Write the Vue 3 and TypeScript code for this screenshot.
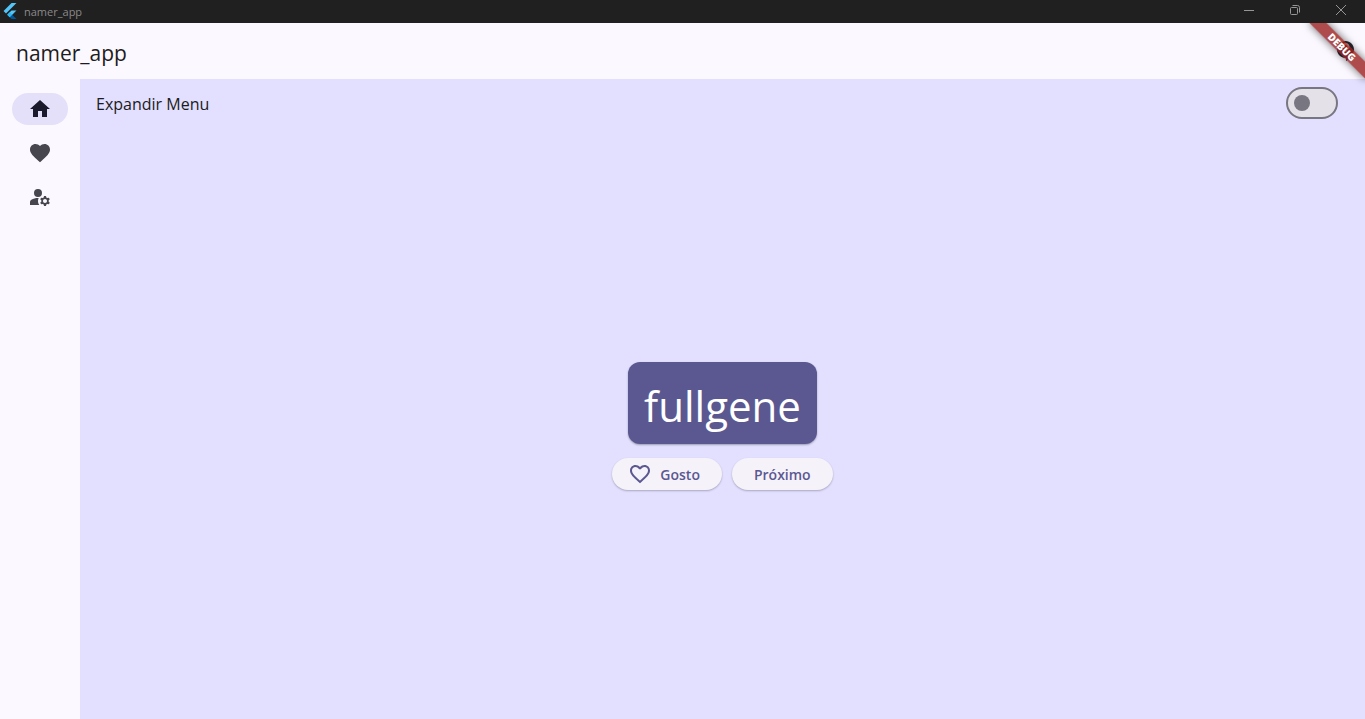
<script setup lang="ts">
import { ref } from 'vue'

interface Destination {
  id: string
  label: string
  path: string
}

const destinations: Destination[] = [
  { id: 'home', label: 'Início', path: 'M10 20v-6h4v6h5v-8h3L12 3 2 12h3v8z' },
  {
    id: 'favorites',
    label: 'Favoritos',
    path: 'M12 21.35l-1.45-1.32C5.4 15.36 2 12.28 2 8.5 2 5.42 4.42 3 7.5 3c1.74 0 3.41.81 4.5 2.09C13.09 3.81 14.76 3 16.5 3 19.58 3 22 5.42 22 8.5c0 3.78-3.4 6.86-8.55 11.54L12 21.35z',
  },
  {
    id: 'account',
    label: 'Conta',
    path: 'M10 4a4 4 0 1 0 0 8 4 4 0 1 0 0-8zM10.67 13.02C10.45 13.01 10.23 13 10 13c-2.42 0-4.68.67-6.61 1.82C2.51 15.34 2 16.32 2 17.35V20h9.26C10.47 18.87 10 17.49 10 16c0-1.07.25-2.07.67-2.98zM20.75 16c0-.22-.03-.42-.06-.63l1.14-1.01-1-1.73-1.45.49c-.32-.27-.68-.48-1.08-.63L18 11h-2l-.3 1.49c-.4.15-.76.36-1.08.63l-1.45-.49-1 1.73 1.14 1.01c-.03.21-.06.41-.06.63s.03.42.06.63l-1.14 1.01 1 1.73 1.45-.49c.32.27.68.48 1.08.63L16 21h2l.3-1.49c.4-.15.76-.36 1.08-.63l1.45.49 1-1.73-1.14-1.01c.03-.21.06-.41.06-.63zM17 18c-1.1 0-2-.9-2-2s.9-2 2-2 2 .9 2 2-.9 2-2 2z',
  },
]

const selected = ref('home')
const expanded = ref(false)
const words = ['fullgene', 'bluebird', 'sunfield']
const index = ref(0)

function next(): void {
  index.value = (index.value + 1) % words.length
}
</script>

<template>
  <div class="window">
    <header class="titlebar">
      <svg class="logo" viewBox="0 0 24 24" aria-hidden="true">
        <path fill="#54c5f8" d="M14.3 0 2.3 12 6 15.7 21.7 0z" />
        <path fill="#54c5f8" d="M14.3 11.1 7.9 17.5l3.7 3.7 10.1-10.1z" />
        <path fill="#01579b" d="m11.6 21.2 2.8 2.8h7.3l-6.4-6.5z" />
        <path fill="#29b6f6" d="m7.9 17.5 3.7-3.7 3.7 3.7-3.7 3.7z" />
      </svg>
      <span class="window-name">namer_app</span>
      <div class="window-buttons">
        <button type="button" aria-label="Minimizar">
          <svg viewBox="0 0 10 10"><path d="M0 5.5h10" /></svg>
        </button>
        <button type="button" aria-label="Restaurar">
          <svg viewBox="0 0 10 10">
            <rect x=".5" y="2.5" width="7" height="7" rx="1" />
            <path d="M2.5 .5h5a2 2 0 0 1 2 2v5" />
          </svg>
        </button>
        <button type="button" aria-label="Fechar">
          <svg viewBox="0 0 10 10"><path d="M0 0l10 10M10 0 0 10" /></svg>
        </button>
      </div>
    </header>

    <div class="app">
      <div class="appbar">
        <h1>namer_app</h1>
        <button class="support" type="button" aria-label="Ajuda">
          <svg viewBox="0 0 24 24">
            <path
              d="M11.5 2C6.81 2 3 5.81 3 10.5S6.81 19 11.5 19h.5v3c4.86-2.34 8-7 8-11.5C20 5.81 16.19 2 11.5 2zm1 14.5h-2v-2h2v2zm0-3.5h-2c0-3.25 3-3 3-5 0-1.1-.9-2-2-2s-2 .9-2 2h-2c0-2.21 1.79-4 4-4s4 1.79 4 4c0 2.500-3 2.750-3 5z"
            />
          </svg>
        </button>
      </div>
      <div class="ribbon">DEBUG</div>

      <div class="body">
        <nav class="rail">
          <button
            v-for="item in destinations"
            :key="item.id"
            type="button"
            :class="{ active: selected === item.id }"
            :aria-label="item.label"
            @click="selected = item.id"
          >
            <svg viewBox="0 0 24 24"><path :d="item.path" /></svg>
          </button>
        </nav>

        <main class="content">
          <div class="option">
            <label for="expand">Expandir Menu</label>
            <input id="expand" v-model="expanded" class="switch" type="checkbox" role="switch" />
          </div>
          <div class="stage">
            <div class="card">{{ words[index] }}</div>
            <div class="actions">
              <button class="like" type="button">
                <svg viewBox="0 0 24 24">
                  <path
                    d="M16.5 3c-1.74 0-3.41.81-4.5 2.09C10.91 3.81 9.24 3 7.5 3 4.42 3 2 5.42 2 8.5c0 3.78 3.4 6.86 8.55 11.54L12 21.35l1.45-1.32C18.6 15.36 22 12.28 22 8.5 22 5.42 19.58 3 16.5 3zm-4.4 15.55l-.1.1-.1-.1C7.14 14.24 4 11.39 4 8.5 4 6.5 5.500 5 7.5 5c1.54 0 3.040.99 3.570 2.360h1.870C13.460 5.990 14.960 5 16.5 5c2 0 3.500 1.500 3.500 3.500 0 2.890-3.140 5.740-7.900 10.050z"
                  />
                </svg>
                <span>Gosto</span>
              </button>
              <button type="button" @click="next"><span>Próximo</span></button>
            </div>
          </div>
        </main>
      </div>
    </div>
  </div>
</template>

<style>
body {
  margin: 0;
}
</style>

<style scoped>
.window {
  display: flex;
  flex-direction: column;
  height: 100vh;
  overflow: hidden;
  background: #fcf8ff;
  color: #1c1b20;
  font-family: 'Open Sans', 'Noto Sans', sans-serif;
}
button {
  border: 0;
  padding: 0;
  background: none;
  font-family: inherit;
  color: inherit;
  cursor: pointer;
}
svg {
  display: block;
}
.titlebar {
  display: flex;
  align-items: center;
  height: 23px;
  flex: none;
  background: #202020;
  color: #8a8a8a;
}
.logo {
  width: 16px;
  height: 16px;
  margin: 0 4px 1px 2px;
}
.window-name {
  flex: 1;
  padding-left: 2px;
  font-size: 11px;
  line-height: 22px;
}
.window-buttons {
  display: flex;
  align-self: flex-start;
  padding-right: 1px;
}
.window-buttons button {
  display: grid;
  place-items: center;
  width: 46px;
  height: 20px;
}
.window-buttons svg {
  width: 10px;
  height: 10px;
  overflow: visible;
  fill: none;
  stroke: #969696;
  stroke-width: 1;
}
.app {
  position: relative;
  display: flex;
  flex: 1;
  flex-direction: column;
  min-height: 0;
  overflow: hidden;
}
.appbar {
  display: flex;
  align-items: center;
  justify-content: space-between;
  height: 56px;
  flex: none;
  padding: 0 7px 0 16px;
}
h1 {
  margin: 0;
  padding-top: 4px;
  font-size: 21px;
  font-weight: 400;
  line-height: 28px;
}
.support svg {
  width: 24px;
  height: 24px;
  fill: #2b2a33;
}
.ribbon {
  position: absolute;
  top: 18px;
  right: -17px;
  width: 80px;
  height: 12px;
  transform: rotate(45deg);
  background: rgba(154, 32, 32, 0.8);
  box-shadow: 0 0 8px rgba(0, 0, 0, 0.6);
  color: #fff;
  font-size: 10px;
  font-weight: 900;
  line-height: 12px;
  text-align: center;
}
.body {
  display: flex;
  flex: 1;
  min-height: 0;
}
.rail {
  display: flex;
  flex-direction: column;
  align-items: center;
  gap: 12px;
  width: 80px;
  flex: none;
  padding-top: 14px;
}
.rail button {
  display: grid;
  place-items: center;
  width: 56px;
  height: 32px;
  border-radius: 16px;
}
.rail svg {
  width: 24px;
  height: 24px;
  fill: #47464f;
}
.rail .active {
  background: #e4e0f9;
}
.rail .active svg {
  fill: #1b1a2c;
}
.content {
  display: flex;
  flex: 1;
  flex-direction: column;
  background: #e2dfff;
}
.option {
  display: flex;
  align-items: center;
  justify-content: space-between;
  height: 48px;
  padding: 0 27px 0 16px;
}
.option label {
  padding-top: 2px;
  font-size: 16px;
  line-height: 24px;
}
.switch {
  appearance: none;
  display: flex;
  align-items: center;
  box-sizing: border-box;
  width: 52px;
  height: 32px;
  margin: 0;
  padding: 0 6px;
  border: 2px solid #787680;
  border-radius: 16px;
  background: #e5e1e9;
  cursor: pointer;
}
.switch::before {
  content: '';
  width: 16px;
  height: 16px;
  border-radius: 50%;
  background: #787680;
}
.switch:checked {
  justify-content: flex-end;
  background: #5b5891;
}
.switch:checked::before {
  background: #fff;
}
.stage {
  display: flex;
  flex: 1;
  flex-direction: column;
  align-items: center;
  justify-content: center;
  gap: 14px;
  padding-top: 6px;
}
.card {
  padding: 14px 16px 8px;
  border-radius: 12px;
  background: #5b5891;
  box-shadow: 0 1px 2px rgba(0, 0, 0, 0.3);
  color: #fff;
  font-size: 42px;
  line-height: 60px;
}
.actions {
  display: flex;
  gap: 10px;
}
.actions button {
  display: flex;
  align-items: center;
  gap: 8px;
  height: 32px;
  padding: 0 22px;
  border-radius: 16px;
  background: #f6f2fa;
  box-shadow: 0 1px 2px rgba(0, 0, 0, 0.25);
  color: #5b5891;
  font-size: 14px;
  font-weight: 600;
  line-height: 20px;
}
.actions span {
  padding-top: 2px;
}
.actions .like {
  padding-left: 16px;
}
.like svg {
  width: 24px;
  height: 24px;
  fill: #5b5891;
}
</style>
